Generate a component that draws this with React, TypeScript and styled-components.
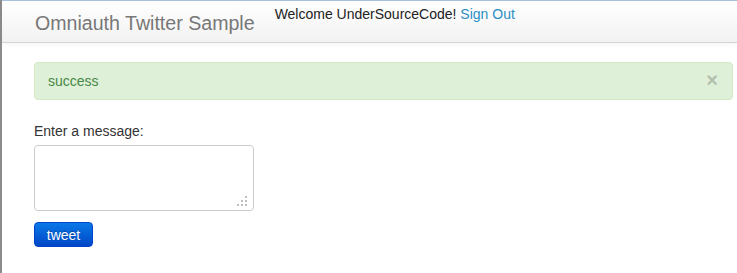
import styled, { createGlobalStyle } from "styled-components";

const GlobalStyle = createGlobalStyle`
    html, body {
        margin: 0;
        padding: 0;
        background: #fff;
    }
    body {
        font-family: "Liberation Sans", Arial, sans-serif;
        font-size: 14px;
        line-height: 20px;
        color: #333;
    }
`;

const Page = styled.div`
    min-height: 273px;
    border-left: 2px solid #8c8c8c;
    box-sizing: border-box;
`;

const Navbar = styled.div`
    display: flex;
    align-items: flex-start;
    height: 41px;
    border-top: 1px solid #a8c0de;
    border-bottom: 1px solid #d4d4d4;
    background: linear-gradient(to bottom, #ffffff, #f2f2f2);
    box-shadow: 0 1px 6px rgba(0, 0, 0, 0.05);
    padding-left: 33px;
`;

const Brand = styled.a`
    font-size: 19.6px;
    line-height: 24px;
    color: #777;
    padding-top: 10px;
    margin-right: 20px;
    text-decoration: none;
`;

const Welcome = styled.div`
    padding-top: 3px;
    font-size: 14px;
    color: #222;
`;

const NavLink = styled.a`
    color: #2a8fc4;
    text-decoration: none;
`;

const Container = styled.div`
    padding: 19px 4px 0 32px;
`;

const Alert = styled.div`
    position: relative;
    padding: 8px 35px 8px 13px;
    background: #dff0d8;
    border: 1px solid #d6e9c6;
    border-radius: 4px;
    color: #468847;
    margin-bottom: 21px;
`;

const Close = styled.span`
    position: absolute;
    right: 14px;
    top: 7px;
    font-size: 20px;
    font-weight: bold;
    line-height: 20px;
    color: #000;
    opacity: 0.2;
`;

const Label = styled.label`
    display: block;
    margin-bottom: 4px;
`;

const TextBox = styled.div`
    position: relative;
    width: 220px;
    margin-bottom: 11px;
`;

const TextArea = styled.textarea`
    display: block;
    box-sizing: border-box;
    width: 220px;
    height: 66px;
    border: 1px solid #ccc;
    border-radius: 4px;
    resize: none;
    font-family: inherit;
    font-size: 14px;
    padding: 4px 6px;
    outline: none;
`;

const Grip = styled.svg`
    position: absolute;
    right: 7px;
    bottom: 5px;
`;

const Button = styled.button`
    box-sizing: border-box;
    width: 59px;
    height: 25px;
    padding: 0;
    border: 1px solid #0044cc;
    border-radius: 4px;
    background: linear-gradient(to bottom, #0a78e6, #0047c8);
    color: #fff;
    font-family: inherit;
    font-size: 14px;
    line-height: 20px;
    text-shadow: 0 -1px 0 rgba(0, 0, 0, 0.25);
`;

export default function App() {
    const dots = [
        [8, 0],
        [4, 4],
        [8, 4],
        [0, 8],
        [4, 8],
        [8, 8],
    ];
    return (
        <Page>
            <GlobalStyle />
            <Navbar>
                <Brand href="#">Omniauth Twitter Sample</Brand>
                <Welcome>
                    Welcome UnderSourceCode! <NavLink href="#">Sign Out</NavLink>
                </Welcome>
            </Navbar>
            <Container>
                <Alert>
                    success
                    <Close>×</Close>
                </Alert>
                <Label>Enter a message:</Label>
                <TextBox>
                    <TextArea />
                    <Grip width="10" height="10" viewBox="0 0 10 10">
                        {dots.map(([x, y]) => (
                            <rect key={`${x}-${y}`} x={x} y={y} width="2" height="2" fill="#bdbdbd" />
                        ))}
                    </Grip>
                </TextBox>
                <Button>tweet</Button>
            </Container>
        </Page>
    );
}
